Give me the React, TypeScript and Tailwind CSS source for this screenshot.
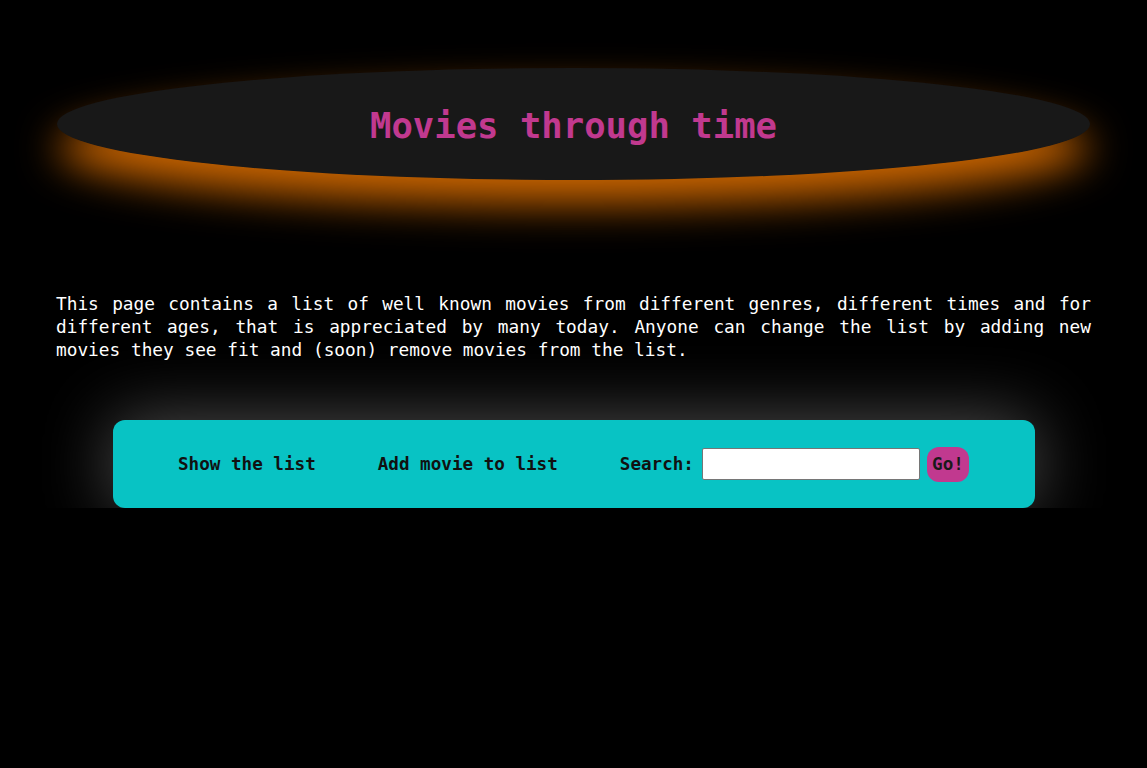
import React from "react";

const mono = "font-['DejaVu_Sans_Mono',monospace]";

const App = () => {
  return (
    <div className={`flex min-h-screen flex-col bg-black ${mono}`}>
      <div className="px-[56px]">
        <header className="mx-px mt-[68px] flex h-[112px] items-center justify-center rounded-[50%] bg-[#181818] pt-[3px] shadow-[0_24px_40px_#c86400]">
          <h1 className="text-[35.6px] font-bold text-[#c1398f]">
            Movies through time
          </h1>
        </header>

        <p className="mt-[112px] text-justify text-[17.8px] leading-[23px] text-white">
          This page contains a list of well known movies from different genres,
          different times and for different ages, that is appreciated by many
          today. Anyone can change the list by adding new movies they see fit
          and (soon) remove movies from the list.
        </p>

        <nav className="mx-auto mt-[59px] flex h-[88px] w-[922px] items-center justify-center gap-[62px] rounded-xl bg-[#08c3c4] shadow-[0_0_70px_rgba(255,255,255,0.32)]">
          <a className="cursor-pointer text-[17.6px] font-bold text-[#111]">
            Show the list
          </a>
          <a className="cursor-pointer text-[17.6px] font-bold text-[#111]">
            Add movie to list
          </a>
          <div className="flex items-center">
            <label className="text-[17.6px] font-bold text-[#111]">
              Search:
            </label>
            <input
              type="text"
              className="ml-[8px] h-[32px] w-[218px] rounded-[2px] border border-[#767676] bg-white px-1"
            />
            <button className="ml-[7px] h-[35px] w-[42px] rounded-xl bg-[#c1398f] text-[17.6px] font-bold text-[#1a1a1a]">
              Go!
            </button>
          </div>
        </nav>
      </div>
      <main className="flex-1 bg-black" />
    </div>
  );
};

export default App;
